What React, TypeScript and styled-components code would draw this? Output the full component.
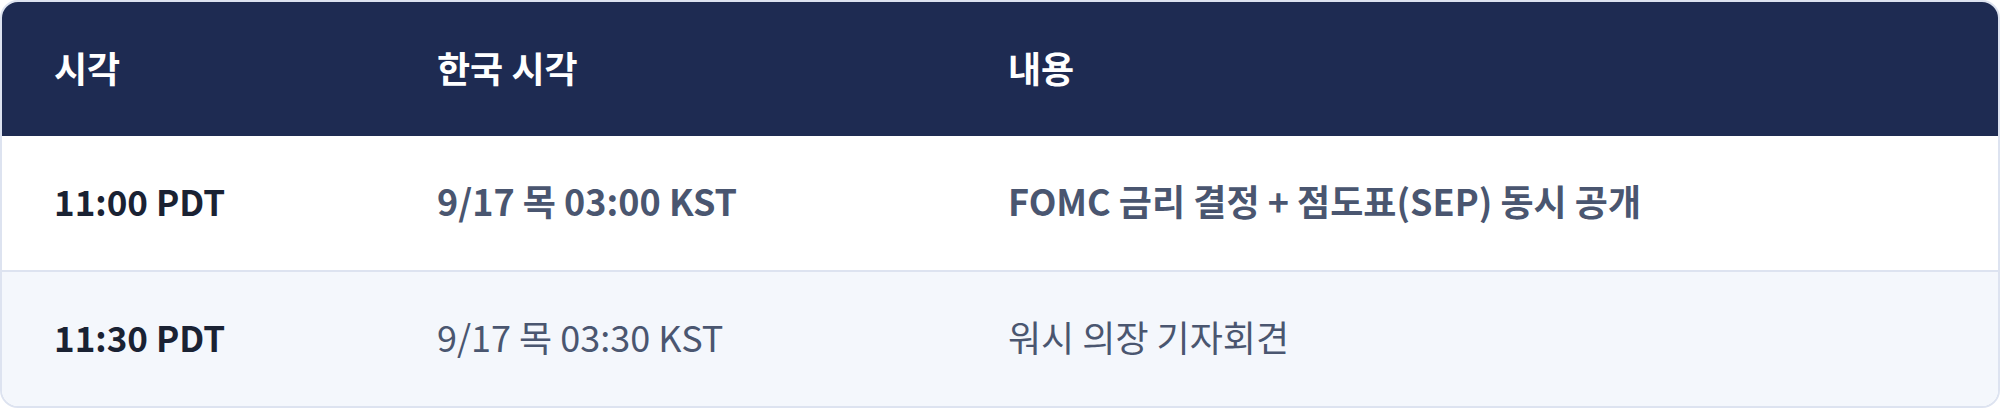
import React from 'react';
import styled, {createGlobalStyle} from 'styled-components';

const GlobalStyle = createGlobalStyle`
  html, body {
    margin: 0;
    padding: 0;
    background: #ffffff;
  }
  body {
    font-family: "Noto Sans CJK KR", "Noto Sans", sans-serif;
  }
`;

type Row = {
  local: string;
  kst: string;
  content: string;
  highlight?: boolean;
};

const rows: Row[] = [
  {
    local: '11:00 PDT',
    kst: '9/17 목 03:00 KST',
    content: 'FOMC 금리 결정 + 점도표(SEP) 동시 공개',
    highlight: true,
  },
  {
    local: '11:30 PDT',
    kst: '9/17 목 03:30 KST',
    content: '워시 의장 기자회견',
  },
];

const App: React.FC = () => {
  return (
    <>
      <GlobalStyle />
      <Card>
        <Header>
          <HeadCell>시각</HeadCell>
          <HeadCell>한국 시각</HeadCell>
          <HeadCell>내용</HeadCell>
        </Header>
        {rows.map((row, i) => (
          <BodyRow key={row.local} $striped={i % 2 === 1} $last={i === rows.length - 1}>
            <TimeCell>{row.local}</TimeCell>
            <Cell $strong={row.highlight}>{row.kst}</Cell>
            <Cell $strong={row.highlight}>{row.content}</Cell>
          </BodyRow>
        ))}
      </Card>
    </>
  );
};

const Card = styled.div`
  box-sizing: border-box;
  width: 2000px;
  height: 408px;
  border: 2px solid #dde3f0;
  border-radius: 18px;
  overflow: hidden;
  background: #ffffff;
`;

const Grid = styled.div`
  display: grid;
  grid-template-columns: 383px 571px 1fr;
  align-items: center;
`;

const Header = styled(Grid)`
  height: 134px;
  background: #1e2b52;
`;

const HeadCell = styled.div`
  padding-left: 52px;
  font-size: 36px;
  font-weight: 700;
  color: #ffffff;
  line-height: 1;
  padding-bottom: 4px;
`;

const BodyRow = styled(Grid)<{$striped?: boolean; $last?: boolean}>`
  box-sizing: border-box;
  height: ${p => (p.$last ? '134px' : '136px')};
  background: ${p => (p.$striped ? '#f4f7fc' : '#ffffff')};
  border-bottom: ${p => (p.$last ? 'none' : '2px solid #dde3f0')};
`;

const Cell = styled.div<{$strong?: boolean}>`
  padding-left: 52px;
  font-size: 36px;
  line-height: 1;
  font-weight: ${p => (p.$strong ? 700 : 400)};
  color: #4a5670;
  padding-bottom: 6px;
`;

const TimeCell = styled(Cell)`
  font-size: 35px;
  font-weight: 700;
  color: #1a2233;
`;

export default App;
